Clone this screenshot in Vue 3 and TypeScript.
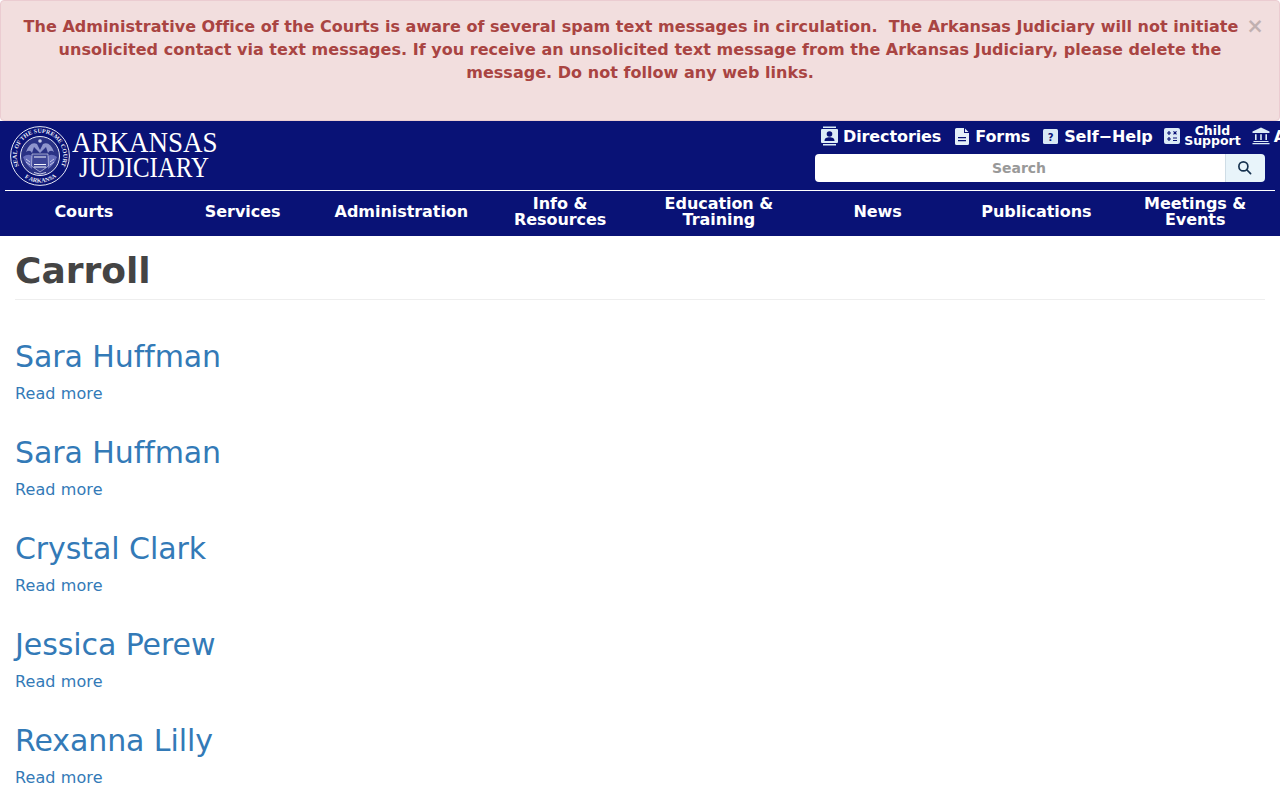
<script setup lang="ts">
const navItems: string[][] = [
  ['Courts'],
  ['Services'],
  ['Administration'],
  ['Info &', 'Resources'],
  ['Education &', 'Training'],
  ['News'],
  ['Publications'],
  ['Meetings &', 'Events'],
]
const people: string[] = ['Sara Huffman', 'Sara Huffman', 'Crystal Clark', 'Jessica Perew', 'Rexanna Lilly']
</script>

<template>
  <div class="page">
    <div class="alert">
      <span class="close">×</span>
      <p>The Administrative Office of the Courts is aware of several spam text messages in circulation.&nbsp; The Arkansas Judiciary will not initiate unsolicited contact via text messages. If you receive an unsolicited text message from the Arkansas Judiciary, please delete the message. Do not follow any web links.</p>
    </div>
    <header class="header">
      <div class="top">
        <div class="logo">
          <svg class="seal" viewBox="0 0 60 60" width="60" height="60">
            <circle cx="30" cy="30" r="29.400" fill="none" stroke="#e6e8f5" stroke-width="1" />
            <circle cx="30" cy="30" r="19.500" fill="#2a3285" stroke="#e6e8f5" stroke-width="1" />
            <defs>
              <path id="sealTop" d="M11 43.300 A23.200 23.200 0 1 1 49 43.300" />
              <path id="sealBottom" d="M14.800 51.700 A26.500 26.500 0 0 0 45.200 51.700" />
            </defs>
            <text class="seal-text"><textPath href="#sealTop" startOffset="50%" text-anchor="middle">SEAL OF THE SUPREME COURT</textPath></text>
            <text class="seal-text"><textPath href="#sealBottom" startOffset="50%" text-anchor="middle">OF ARKANSAS</textPath></text>
            <path d="M16 26 Q20 15 27 18 L30 24 L33 18 Q40 15 44 26 Q40 23 38 27 L36 21 L30 27 L24 21 L22 27 Q20 23 16 26Z" fill="#8f95cd" />
            <path d="M13 31 Q18 27 22 30 L22 43 Q16 39 13 31Z M47 31 Q42 27 38 30 L38 43 Q44 39 47 31Z" fill="#666dba" />
            <path d="M16 33 L20 36 M16 36 L20 39 M44 33 L40 36 M44 36 L40 39" stroke="#c4c8ea" stroke-width="1" />
            <path d="M22 28 H38 L38.500 40 L30 46 L21.500 40Z" fill="#3d4596" stroke="#dfe2f4" stroke-width="0.600" />
            <path d="M24 31 H36 M24 38.500 H36 M24 41 H36" stroke="#f4f5fc" stroke-width="1.100" />
            <circle cx="30" cy="15" r="1.800" fill="#c9cde9" />
            <path d="M24 46.500 Q30 49.500 36 46.500" fill="none" stroke="#c9cde9" stroke-width="1" />
          </svg>
          <div class="wordmark">
            <span class="w1">ARKANSAS</span>
            <span class="w2">JUDICIARY</span>
          </div>
        </div>
        <div class="tools">
          <div class="links">
            <a class="tool t-dir">
              <svg width="17" height="20" viewBox="0 0 17 20"><path fill="#dcebf7" d="M2 0.500h13v1.500H2zM2 18h13v1.500H2zM1 3h15a1 1 0 0 1 1 1v12a1 1 0 0 1-1 1H1a1 1 0 0 1-1-1V4a1 1 0 0 1 1-1z"/><circle cx="8.500" cy="8" r="2.800" fill="#091276"/><path fill="#091276" d="M3.500 15c0-2.800 2.200-3.800 5-3.800s5 1 5 3.800z"/></svg>
              <span>Directories</span>
            </a>
            <a class="tool t-form">
              <svg width="14" height="17" viewBox="0 0 14 17"><path fill="#e4eff8" d="M1.500 0H9v5h5v10.500a1.500 1.500 0 0 1-1.500 1.500h-11A1.500 1.500 0 0 1 0 15.500v-14A1.500 1.500 0 0 1 1.500 0z"/><path fill="#e4eff8" d="M10 0.500 13.500 4H10z"/><path fill="#091276" d="M3 9h8v1.200H3zM3 12h8v1.200H3z"/></svg>
              <span>Forms</span>
            </a>
            <a class="tool t-help">
              <svg width="15" height="15" viewBox="0 0 15 15"><rect width="15" height="15" rx="1.500" fill="#d8e8f5"/><text x="7.500" y="11.500" class="q">?</text></svg>
              <span>Self−Help</span>
            </a>
            <a class="tool t-child">
              <svg width="16" height="16" viewBox="0 0 16 16"><rect width="16" height="16" rx="2" fill="#dcebf7"/><path stroke="#091276" stroke-width="1.200" d="M3 5h4M5 3v4M9.500 3.300l3 3M12.500 3.300l-3 3M3 11h4M5 9v4M9 10h4M9 12.500h4"/></svg>
              <span class="stack"><span>Child</span><span>Support</span></span>
            </a>
            <a class="tool t-bank">
              <svg width="18" height="18" viewBox="0 0 18 18"><path fill="#dcebf7" d="M9 0.500 17.500 4.500V6H.5V4.500zM3 7.200h1.600V13H3zM8.200 7.200h1.600V13H8.200zM13.400 7.200h1.600V13h-1.600zM1.500 14h15v1.100h-15zM.5 16h17v1.300H.5z"/></svg>
              <span>Administration</span>
            </a>
          </div>
          <div class="search">
            <div class="search-input">Search</div>
            <button class="search-btn" type="button" aria-label="Search">
              <svg width="15" height="15" viewBox="0 0 16 16" fill="none" stroke="#16324f" stroke-width="1.800"><circle cx="6.800" cy="6.800" r="4.800"/><path d="M10.400 10.400 14.500 14.500" stroke-linecap="round"/></svg>
            </button>
          </div>
        </div>
      </div>
      <nav class="nav">
        <a v-for="item in navItems" :key="item[0]" class="nav-item">
          <span v-for="line in item" :key="line">{{ line }}</span>
        </a>
      </nav>
    </header>
    <main class="main">
      <h1 class="title">Carroll</h1>
      <article v-for="(name, i) in people" :key="i" class="person">
        <h2>{{ name }}</h2>
        <a class="more">Read more</a>
      </article>
    </main>
  </div>
</template>

<style>
html, body { margin: 0; overflow: hidden; }
</style>

<style scoped>
.page {
  width: 1280px;
  height: 800px;
  overflow: hidden;
  font-family: "DejaVu Sans", sans-serif;
  font-size: 16px;
  background: #fff;
}
.alert {
  box-sizing: border-box;
  height: 121px;
  padding: 14px 15px 15px;
  background: #f2dede;
  border: 1px solid #ebccd1;
  border-radius: 4px;
  color: #a94442;
  font-weight: 700;
  line-height: 23px;
  text-align: center;
  letter-spacing: 0.03px;
}
.alert p { margin: 0; }
.close {
  float: right;
  width: 18px;
  font-size: 21px;
  line-height: 23px;
  letter-spacing: 0;
  color: #000;
  opacity: 0.2;
}
.header {
  height: 115px;
  background: #091276;
  padding: 0 5px;
  box-sizing: border-box;
  overflow: hidden;
}
.top {
  height: 69px;
  display: flex;
  justify-content: space-between;
  border-bottom: 1px solid #fff;
}
.logo { display: flex; align-items: flex-start; padding: 5px 0 0 5px; gap: 2px; box-sizing: border-box; height: 69px; }
.seal { display: block; flex: none; }
.seal-text { font-family: "Liberation Serif", serif; font-size: 6px; font-weight: 700; fill: #eef0fa; }
.q { font-family: "DejaVu Sans", sans-serif; font-size: 10px; font-weight: 700; fill: #091276; text-anchor: middle; }
.wordmark { display: flex; flex-direction: column; font-family: "Liberation Serif", serif; color: #fff; width: 150px; white-space: nowrap; }
.w1, .w2 { display: block; font-size: 30px; line-height: 25px; transform-origin: left center; }
.w1 { margin-top: 3px; transform: scaleX(0.9); }
.w2 { margin-left: 7px; transform: scaleX(0.83); }
.tools { width: 450px; margin-right: 10px; position: relative; }
.links {
  display: flex;
  align-items: center;
  gap: 13px;
  height: 29px;
  padding: 1px 0 0 6px;
  box-sizing: border-box;
  white-space: nowrap;
  color: #fff;
  font-weight: 700;
  font-size: 16px;
  letter-spacing: -0.1px;
}
.tool { display: flex; align-items: center; gap: 6px; flex: none; }
.t-dir { gap: 5px; }
.t-form { margin-left: 1px; }
.t-child { gap: 4px; margin-left: -1.500px; margin-right: -2px; }
.t-bank { gap: 4px; }
.stack { display: flex; flex-direction: column; align-items: center; font-size: 12.500px; line-height: 9.500px; letter-spacing: 0; margin-top: -1px; }
.search { display: flex; height: 28px; margin-top: 4px; }
.search-input {
  flex: 1;
  background: #fff;
  border-radius: 4px 0 0 4px;
  color: #999;
  font-weight: 700;
  font-size: 14px;
  line-height: 28px;
  text-align: center;
  padding-right: 2px;
  letter-spacing: -0.02px;
}
.search-btn {
  width: 40px;
  padding: 0 2px 1px 0;
  border: 0;
  border-left: 1px solid #cfdde6;
  border-radius: 0 4px 4px 0;
  background: #e8f4fa;
  display: flex;
  align-items: center;
  justify-content: center;
}
.nav { display: grid; grid-template-columns: repeat(8, 1fr); height: 42px; }
.nav-item {
  display: flex;
  flex-direction: column;
  align-items: center;
  justify-content: center;
  padding-right: 1px;
  color: #fff;
  font-weight: 700;
  font-size: 16px;
  line-height: 16px;
  letter-spacing: -0.05px;
}
.main { padding: 0 15px; }
.title {
  margin: 0 0 25px;
  height: 64px;
  box-sizing: border-box;
  padding-top: 15px;
  border-bottom: 1px solid #eee;
  font-size: 36px;
  line-height: 40px;
  font-weight: 700;
  color: #444;
}
.person { height: 96px; }
.person h2 {
  margin: 0;
  padding-top: 15px;
  font-size: 30px;
  line-height: 33px;
  font-weight: 400;
  color: #337ab7;
  letter-spacing: -0.08px;
}
.more { display: block; margin-top: 9px; line-height: 23px; color: #337ab7; letter-spacing: 0.1px; }
</style>
